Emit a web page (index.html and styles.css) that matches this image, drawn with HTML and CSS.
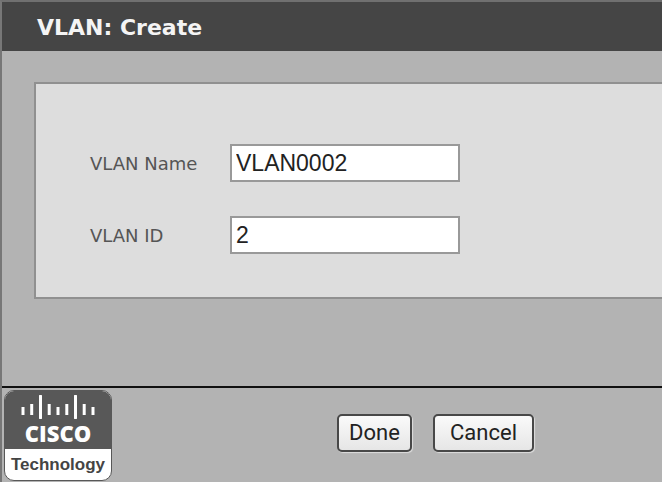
FILE: index.html
```html
<!DOCTYPE html>
<html lang="en">
<head>
    <meta charset="UTF-8">
    <meta name="viewport" content="width=device-width, initial-scale=1.0">
    <title>VLAN: Create</title>
    <link rel="stylesheet" href="styles.css">
</head>
<body>

    <form id="vlanForm">
        <h1>VLAN: Create</h1>

        <div id="content">
            <div class="panel">
                <div class="field">
                    <label for="vlanName">VLAN Name</label>
                    <input id="vlanName" type="text" value="VLAN0002">
                </div>
                <div class="field">
                    <label for="vlanId">VLAN ID</label>
                    <input id="vlanId" type="text" value="2">
                </div>
            </div>
        </div>

        <div id="footer">
            <div class="logo">
                <div class="logoTop">
                    <svg width="74" height="24" viewBox="0 0 74 24" aria-hidden="true">
                        <g stroke="#fff" stroke-width="3">
                            <path d="M2 12V20M10.7 9V20M28.2 9V20M37 12V20M45.8 9V20M63.2 9V20M72 12V20"/>
                            <path d="M19.5 1V23M54.5 1V23" stroke-linecap="round"/>
                        </g>
                    </svg>
                    <span>CISCO</span>
                </div>
                <div class="logoBottom">Technology</div>
            </div>

            <div class="buttons">
                <button type="submit">Done</button>
                <button type="button" class="cancel">Cancel</button>
            </div>
        </div>
    </form>

</body>
</html>
```
FILE: styles.css
```css
* {
    box-sizing: border-box;
}

body {
    margin: 0;
    background: #b3b3b3;
    font-family: "DejaVu Sans", Verdana, sans-serif;
    overflow: hidden;
}

#vlanForm {
    display: flex;
    flex-direction: column;
    min-height: 100vh;
    border-top: 2px solid #707070;
    border-left: 2px solid #777;
}

h1 {
    margin: 0;
    padding: 2px 35px 0;
    background: #454545;
    color: #f4f4f4;
    font-size: 22px;
    line-height: 47px;
}

#content {
    flex-grow: 1;
    padding: 31px 0 32px 32px;
}

.panel {
    display: flex;
    flex-direction: column;
    gap: 34px;
    padding: 60px 54px 43px;
    background: #dddddd;
    border: 2px solid #909090;
    border-right: none;
}

.field {
    display: flex;
    align-items: center;
}

label {
    width: 140px;
    color: #555;
    font-size: 18px;
}

input {
    width: 230px;
    height: 38px;
    padding: 0 4px;
    background: #fff;
    border: 2px solid #999;
    color: #222;
    font-family: "Liberation Sans", Arial, sans-serif;
    font-size: 23px;
}

#footer {
    display: flex;
    align-items: flex-start;
    height: 96px;
    padding: 2px;
    border-top: 2px solid #111;
}

.logo {
    flex-shrink: 0;
    width: 108px;
    border: 1px solid #585858;
    border-radius: 10px;
    background: #fff;
    overflow: hidden;
    text-align: center;
}

.logoTop {
    display: flex;
    flex-direction: column;
    align-items: center;
    height: 58px;
    padding-top: 4px;
    background: #585858;
    color: #fff;
    font-family: "Open Sans", sans-serif;
    font-size: 22px;
    font-weight: 800;
    line-height: 28px;
}

.logoBottom {
    color: #444;
    font-family: "Liberation Sans", Arial, sans-serif;
    font-size: 17px;
    font-weight: bold;
    line-height: 31px;
}

.buttons {
    display: flex;
    flex-grow: 1;
    gap: 21px;
    padding: 24px 0 0 225px;
}

button {
    width: 75px;
    height: 38px;
    padding: 0 0 2px;
    background: linear-gradient(#fafafa, #e6e6e6);
    border: 2px solid #484848;
    border-radius: 5px;
    box-shadow: 1px 1px 1px #ddd;
    color: #222;
    font-family: Roboto, sans-serif;
    font-size: 22px;
}

.cancel {
    width: 101px;
}
```
